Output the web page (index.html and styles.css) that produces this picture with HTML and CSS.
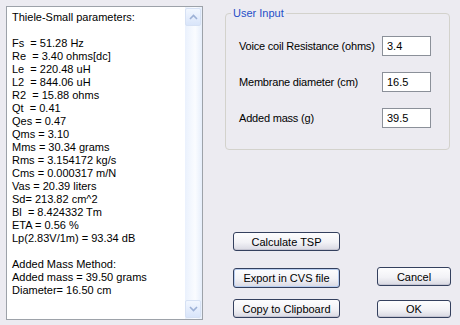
FILE: index.html
```html
<!DOCTYPE html>
<html lang="en">
<head>
  <meta charset="UTF-8">
  <title>Thiele-Small parameters</title>
  <link rel="stylesheet" href="styles.css">
</head>
<body>
  <div class="window">
    <!-- Results box -->
    <div class="results">
      <pre class="results-text">Thiele-Small parameters:

Fs  = 51.28 Hz
Re  = 3.40 ohms[dc]
Le  = 220.48 uH
L2  = 844.06 uH
R2  = 15.88 ohms
Qt  = 0.41
Qes = 0.47
Qms = 3.10
Mms = 30.34 grams
Rms = 3.154172 kg/s
Cms = 0.000317 m/N
Vas = 20.39 liters
Sd= 213.82 cm^2
Bl  = 8.424332 Tm
ETA = 0.56 %
Lp(2.83V/1m) = 93.34 dB

Added Mass Method:
Added mass = 39.50 grams
Diameter= 16.50 cm</pre>
      <div class="scrollbar">
        <div class="scroll-btn">
          <svg width="9" height="6" viewBox="0 0 9 6"><path d="M1 5 L4.5 1.5 L8 5" fill="none" stroke="#9db1d6" stroke-width="1.6"/></svg>
        </div>
        <div class="scroll-track"></div>
        <div class="scroll-btn">
          <svg width="9" height="6" viewBox="0 0 9 6"><path d="M1 1 L4.5 4.5 L8 1" fill="none" stroke="#9db1d6" stroke-width="1.6"/></svg>
        </div>
      </div>
    </div>

    <div class="side">
      <fieldset class="group">
        <legend>User Input</legend>
        <div class="row row-first">
          <label for="re">Voice coil Resistance (ohms)</label>
          <input id="re" class="field" value="3.4">
        </div>
        <div class="row">
          <label for="diam">Membrane diameter (cm)</label>
          <input id="diam" class="field" value="16.5">
        </div>
        <div class="row">
          <label for="mass">Added mass (g)</label>
          <input id="mass" class="field" value="39.5">
        </div>
      </fieldset>

      <div class="buttons">
        <button class="button calc">Calculate TSP</button>
        <button class="button export">Export in CVS file</button>
        <button class="button cancel">Cancel</button>
        <button class="button copy">Copy to Clipboard</button>
        <button class="button ok">OK</button>
      </div>
    </div>
  </div>
</body>
</html>
```

FILE: styles.css
```css
/* Variables */
:root {
  --bg-color: #ecebf1;
  --frame-color: #d3d2cc;
  --legend-color: #1f4fc8;
  --box-border: #9da2a9;
  --font: 'Liberation Sans', Arial, sans-serif;
}

body {
  margin: 0;
  background-color: var(--bg-color);
  font-family: var(--font);
  font-size: 11px;
  color: #000;
}

.window {
  display: flex;
  padding: 6px 0 0 6px;
}

/* Results box */
.results {
  display: flex;
  width: 195px;
  height: 312px;
  border: 1px solid var(--box-border);
  background-color: #fff;
}

.results-text {
  flex: 1;
  margin: 0;
  padding: 4px 0 0 5px;
  font-family: var(--font);
  font-size: 11px;
  line-height: 13px;
  white-space: pre;
  overflow: hidden;
}

.scrollbar {
  display: flex;
  flex-direction: column;
  width: 16px;
  padding: 1px 1px 1px 0;
  background: linear-gradient(to right, #eaf1fd, #fafcff 60%, #e6eefb);
}

.scroll-btn {
  height: 16px;
  border: 1px solid #d6e1f4;
  border-radius: 2px;
  background: linear-gradient(#f2f7ff, #d9e5fa);
  display: flex;
  align-items: center;
  justify-content: center;
}

.scroll-track {
  flex: 1;
}

/* Right side */
.side {
  margin-left: 22px;
  padding-top: 1px;
}

.group {
  width: 223px;
  height: 141px;
  margin: 0;
  padding: 0;
  border: 1px solid var(--frame-color);
  border-radius: 4px;
  box-sizing: content-box;
}

.group legend {
  margin-left: 5px;
  padding: 0 2px;
  color: var(--legend-color);
  font-size: 11px;
  line-height: 13px;
}

.row {
  display: flex;
  align-items: center;
  justify-content: space-between;
  padding: 0 18px 0 13px;
  height: 22px;
  margin-top: 14px;
}

.row-first {
  margin-top: 15px;
}

.row label {
  white-space: nowrap;
  letter-spacing: -0.2px;
}

.field {
  width: 43px;
  height: 18px;
  padding: 0 0 0 4px;
  border: 1px solid #8b9099;
  font-family: var(--font);
  font-size: 11px;
  background-color: #fff;
  outline: none;
}

/* Buttons */
.buttons {
  display: grid;
  grid-template-columns: 107px 74px;
  column-gap: 37px;
  margin: 82px 0 0 8px;
}

.button {
  height: 19px;
  padding: 0;
  font-family: var(--font);
  font-size: 11px;
  color: #000;
  border: 1px solid #34405e;
  border-radius: 3px;
  background: linear-gradient(#fdfdfe, #f2f2f6 55%, #d8d8e2);
  box-shadow: inset 0 -1px 0 #c5c5d2;
}

.calc {
  grid-column: 1;
  grid-row: 1;
}

.export {
  grid-column: 1;
  grid-row: 2;
  margin-top: 17px;
  height: 20px;
  box-shadow: inset 0 0 0 1px #b7cdf0, inset 0 -1px 0 #9fb5e0;
}

.cancel {
  grid-column: 2;
  grid-row: 2;
  margin-top: 16px;
}

.copy {
  grid-column: 1;
  grid-row: 3;
  margin-top: 11px;
}

.ok {
  grid-column: 2;
  grid-row: 3;
  margin-top: 12px;
  height: 18px;
}
```
